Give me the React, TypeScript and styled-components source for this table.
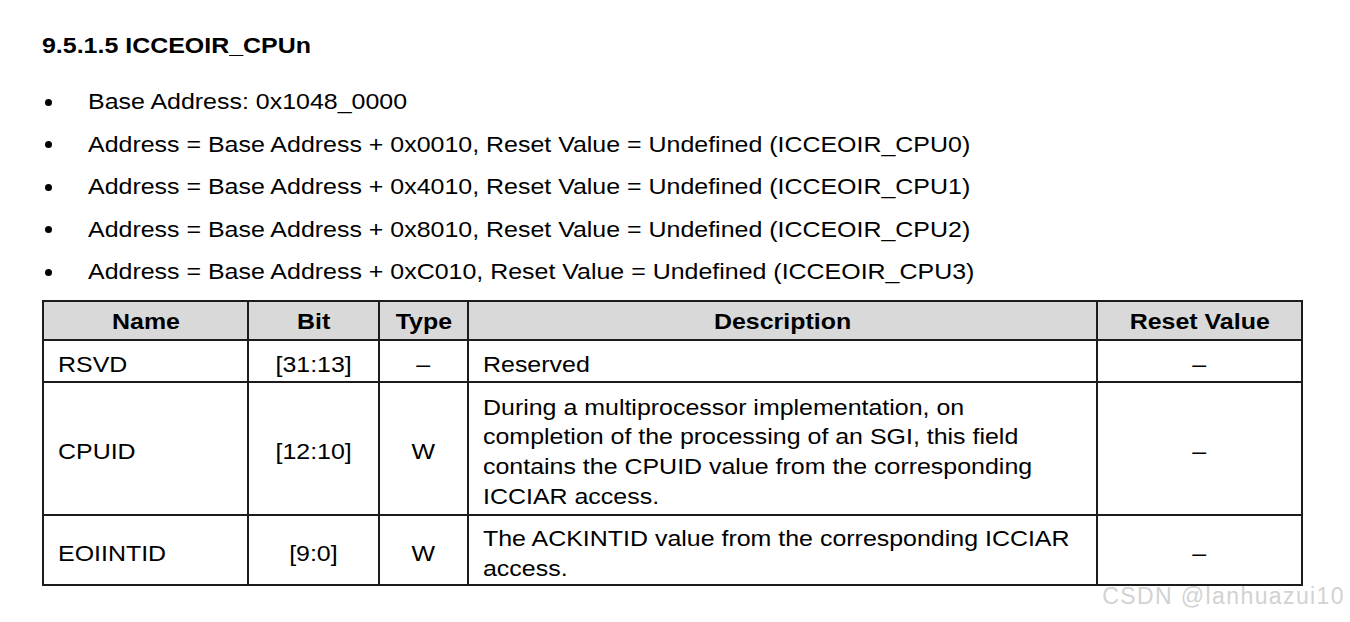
import React from "react";
import styled, { createGlobalStyle } from "styled-components";

const Global = createGlobalStyle`
  html, body { margin: 0; padding: 0; background: #ffffff; }
  body { font-family: "Liberation Sans", Arial, sans-serif; color: #000; }
`;

const Page = styled.div`
  position: relative;
  width: 1350px;
  height: 622px;
  padding: 32px 0 0 42px;
  box-sizing: border-box;
  overflow: hidden;
`;

/* The source document is rendered slightly wide: stretch text horizontally */
const Wide = styled.span<{ $origin?: "left" | "center" }>`
  display: inline-block;
  white-space: nowrap;
  transform: scaleX(1.134);
  transform-origin: ${(p) => (p.$origin === "center" ? "center" : "left")} center;
`;

const Heading = styled.h2`
  margin: 0;
  font-size: 22px;
  font-weight: 700;
  line-height: 28px;
  height: 28px;
`;

const List = styled.ul`
  margin: 21px 0 0 0;
  padding: 0;
  list-style: none;
`;

const Item = styled.li`
  display: flex;
  align-items: center;
  height: 42.5px;
  font-size: 22px;
  line-height: 42.5px;
`;

const Dot = styled.span`
  width: 7px;
  height: 7px;
  border-radius: 50%;
  background: #000;
  margin: 0 36px 0 3px;
  flex: none;
`;

const Table = styled.table`
  margin-top: 6px;
  border-collapse: collapse;
  table-layout: fixed;
  width: 1259px;
  font-size: 22px;
`;

const Th = styled.th<{ $w: number }>`
  width: ${(p) => p.$w}px;
  height: 34px;
  padding: 3px 0 0;
  background: #d9d9d9;
  border: 2px solid #1c1c1c;
  font-weight: 700;
  text-align: center;
  line-height: 26px;
`;

const Td = styled.td<{ $center?: boolean; $h: number }>`
  height: ${(p) => p.$h - 8}px;
  padding: 8px 14px 0;
  border: 2px solid #1c1c1c;
  text-align: ${(p) => (p.$center ? "center" : "left")};
  vertical-align: middle;
  line-height: 29.7px;
`;

const Watermark = styled.div`
  position: absolute;
  right: 5px;
  top: 583px;
  font-size: 23px;
  color: #d2d2d2;
  letter-spacing: 1.4px;
`;

const items = [
  "Base Address: 0x1048_0000",
  "Address = Base Address + 0x0010, Reset Value = Undefined (ICCEOIR_CPU0)",
  "Address = Base Address + 0x4010, Reset Value = Undefined (ICCEOIR_CPU1)",
  "Address = Base Address + 0x8010, Reset Value = Undefined (ICCEOIR_CPU2)",
  "Address = Base Address + 0xC010, Reset Value = Undefined (ICCEOIR_CPU3)",
];

const headers = [
  { label: "Name", w: 203 },
  { label: "Bit", w: 129 },
  { label: "Type", w: 87 },
  { label: "Description", w: 627 },
  { label: "Reset Value", w: 203 },
];

const rows = [
  { name: "RSVD", bit: "[31:13]", type: "–", desc: ["Reserved"], reset: "–", h: 40 },
  {
    name: "CPUID",
    bit: "[12:10]",
    type: "W",
    desc: [
      "During a multiprocessor implementation, on",
      "completion of the processing of an SGI, this field",
      "contains the CPUID value from the corresponding",
      "ICCIAR access.",
    ],
    reset: "–",
    h: 131,
  },
  {
    name: "EOIINTID",
    bit: "[9:0]",
    type: "W",
    desc: ["The ACKINTID value from the corresponding ICCIAR", "access."],
    reset: "–",
    h: 68,
  },
];

export default function App() {
  return (
    <>
      <Global />
      <Page>
        <Heading>
          <Wide>9.5.1.5 ICCEOIR_CPUn</Wide>
        </Heading>
        <List>
          {items.map((t) => (
            <Item key={t}>
              <Dot />
              <Wide>{t}</Wide>
            </Item>
          ))}
        </List>
        <Table>
          <thead>
            <tr>
              {headers.map((h) => (
                <Th key={h.label} $w={h.w}>
                  <Wide $origin="center">{h.label}</Wide>
                </Th>
              ))}
            </tr>
          </thead>
          <tbody>
            {rows.map((r) => (
              <tr key={r.name}>
                <Td $h={r.h}>
                  <Wide>{r.name}</Wide>
                </Td>
                <Td $h={r.h} $center>
                  <Wide $origin="center">{r.bit}</Wide>
                </Td>
                <Td $h={r.h} $center>
                  <Wide $origin="center">{r.type}</Wide>
                </Td>
                <Td $h={r.h}>
                  <Wide>
                    {r.desc.map((l, i) => (
                      <React.Fragment key={i}>
                        {i > 0 && <br />}
                        {l}
                      </React.Fragment>
                    ))}
                  </Wide>
                </Td>
                <Td $h={r.h} $center>
                  <Wide $origin="center">{r.reset}</Wide>
                </Td>
              </tr>
            ))}
          </tbody>
        </Table>
        <Watermark>CSDN @lanhuazui10</Watermark>
      </Page>
    </>
  );
}
